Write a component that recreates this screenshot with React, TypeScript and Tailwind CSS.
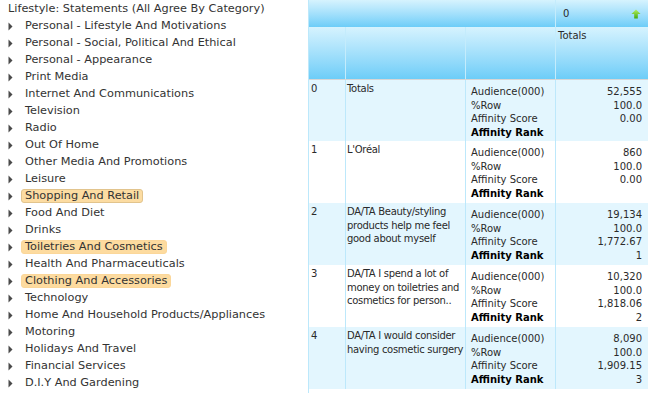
import React from "react";

const items: { label: string; hl?: "strong" | "soft" }[] = [
  { label: "Personal - Lifestyle And Motivations" },
  { label: "Personal - Social, Political And Ethical" },
  { label: "Personal - Appearance" },
  { label: "Print Media" },
  { label: "Internet And Communications" },
  { label: "Television" },
  { label: "Radio" },
  { label: "Out Of Home" },
  { label: "Other Media And Promotions" },
  { label: "Leisure" },
  { label: "Shopping And Retail", hl: "strong" },
  { label: "Food And Diet" },
  { label: "Drinks" },
  { label: "Toiletries And Cosmetics", hl: "soft" },
  { label: "Health And Pharmaceuticals" },
  { label: "Clothing And Accessories", hl: "soft" },
  { label: "Technology" },
  { label: "Home And Household Products/Appliances" },
  { label: "Motoring" },
  { label: "Holidays And Travel" },
  { label: "Financial Services" },
  { label: "D.I.Y And Gardening" },
];

const rows = [
  { idx: "0", name: ["Totals"], vals: ["52,555", "100.0", "0.00", ""] },
  { idx: "1", name: ["L'Oréal"], vals: ["860", "100.0", "0.00", ""] },
  {
    idx: "2",
    name: ["DA/TA Beauty/styling", "products help me feel", "good about myself"],
    vals: ["19,134", "100.0", "1,772.67", "1"],
  },
  {
    idx: "3",
    name: ["DA/TA I spend a lot of", "money on toiletries and", "cosmetics for person.."],
    vals: ["10,320", "100.0", "1,818.06", "2"],
  },
  {
    idx: "4",
    name: ["DA/TA I would consider", "having cosmetic surgery"],
    vals: ["8,090", "100.0", "1,909.15", "3"],
  },
];

function Tri() {
  return (
    <svg width="5" height="9" viewBox="0 0 5 9" className="shrink-0">
      <polygon points="0.5,0.5 4.5,4.5 0.5,8.5" fill="#4a4a4a" />
    </svg>
  );
}

function Arrow() {
  return (
    <svg width="10" height="10" viewBox="0 0 11 11">
      <defs>
        <linearGradient id="ga" x1="0" y1="0" x2="0" y2="1">
          <stop offset="0" stopColor="#b8f060" />
          <stop offset="1" stopColor="#3faa10" />
        </linearGradient>
      </defs>
      <polygon points="5.5,0.5 10.5,5.5 7.5,5.5 7.5,10.5 3.5,10.5 3.5,5.5 0.5,5.5" fill="url(#ga)" />
    </svg>
  );
}

export default function App() {
  const hdr = "bg-gradient-to-b from-[#d6f3fe] to-[#6ccdf8]";
  return (
    <div
      className="flex w-[648px] h-[393px] overflow-hidden bg-white"
      style={{ fontFamily: '"DejaVu Sans", Verdana, sans-serif' }}
    >
      {/* Left tree */}
      <div className="w-[308px] shrink-0 text-[11.3px] text-[#333]">
        <div className="h-[17px] leading-[17px] pl-[8px]">Lifestyle: Statements (All Agree By Category)</div>
        {items.map((it) => (
          <div key={it.label} className="h-[17px] flex items-center pl-[8px] pt-[1px]">
            <Tri />
            <div className="ml-[12px]">
              <span
                className={
                  it.hl === "strong"
                    ? "inline-block -ml-[4px] px-[3px] leading-[12px] rounded-[3px] bg-[#fcdca2] border border-[#e2c48d]"
                    : it.hl === "soft"
                    ? "inline-block -ml-[4px] px-[3px] leading-[12px] rounded-[3px] bg-[#fddb9f] border border-[#fbd79a]"
                    : "inline-block"
                }
              >
                {it.label}
              </span>
            </div>
          </div>
        ))}
      </div>

      {/* Right table */}
      <div className="flex-1 flex flex-col border-l border-[#bce8fb] text-[10px] text-[#2a2a2a]">
        <div className={`h-[27px] flex ${hdr}`}>
          <div className="w-[247px] border-r border-[#c4ecfc]" />
          <div className="flex-1 flex items-center justify-between pl-[7px] pr-[7px]">
            <span>0</span>
            <Arrow />
          </div>
        </div>
        <div className={`h-[52px] flex ${hdr}`}>
          <div className="w-[37px] border-r border-[#c4ecfc]" />
          <div className="w-[120px] border-r border-[#c4ecfc]" />
          <div className="w-[90px] border-r border-[#c4ecfc]" />
          <div className="flex-1 pl-[2px] pt-[1px]">Totals</div>
        </div>
        <div className="h-px bg-[#d6d6d6]" />
        {rows.map((r, i) => (
          <div
            key={r.idx}
            className={`flex leading-[13.7px] ${i % 2 === 0 ? "bg-[#e3f6fe]" : "bg-white"} ${i === 0 ? "h-[61px]" : "h-[62px]"}`}
          >
            <div className="w-[37px] border-r border-[#bde8fb] pl-[2px] pt-[2px]">{r.idx}</div>
            <div className="w-[120px] border-r border-[#bde8fb] pl-[1px] pt-[2px] whitespace-nowrap tracking-[-0.3px] overflow-hidden">
              {r.name.map((n) => (
                <div key={n}>{n}</div>
              ))}
            </div>
            <div className="w-[90px] border-r border-[#bde8fb] pl-[5px] pt-[5px] whitespace-nowrap">
              <div>Audience(000)</div>
              <div>%Row</div>
              <div>Affinity Score</div>
              <div className="font-bold text-black">Affinity Rank</div>
            </div>
            <div className="flex-1 pr-[6px] pt-[5px] text-right">
              {r.vals.map((v, k) => (
                <div key={k} className="h-[13.7px]">
                  {v}
                </div>
              ))}
            </div>
          </div>
        ))}
        <div className="flex-1 bg-white" />
      </div>
    </div>
  );
}
